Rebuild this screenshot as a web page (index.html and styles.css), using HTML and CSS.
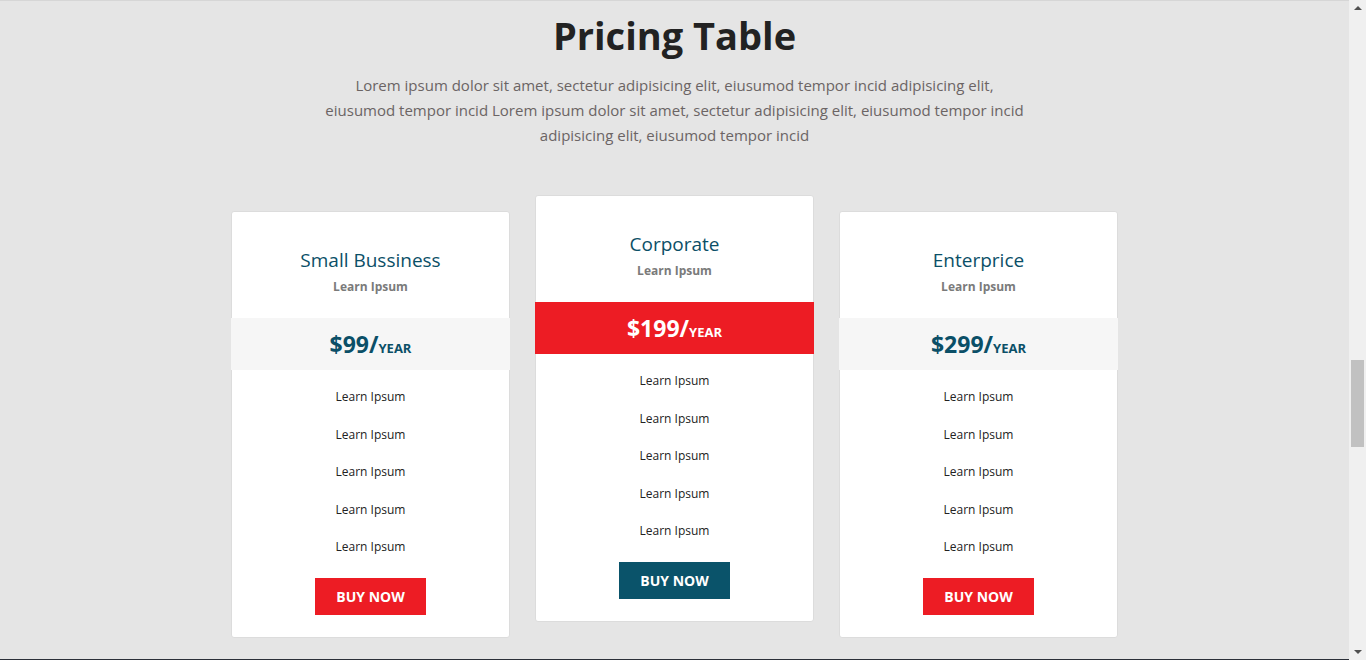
FILE: index.html
```html
<!DOCTYPE html>
<html lang="en">
<head>
<meta charset="utf-8">
<title>Pricing Table</title>
<link rel="stylesheet" href="styles.css">
</head>
<body>
<div class="window">
  <div class="page">
    <section class="pricing">
      <h1 class="title">Pricing Table</h1>
      <p class="lead">Lorem ipsum dolor sit amet, sectetur adipisicing elit, eiusumod tempor incid adipisicing elit,<br>eiusumod tempor incid Lorem ipsum dolor sit amet, sectetur adipisicing elit, eiusumod tempor incid<br>adipisicing elit, eiusumod tempor incid</p>
      <div class="cards">
        <div class="card">
          <h2 class="card-title">Small Bussiness</h2>
          <div class="card-sub">Learn Ipsum</div>
          <div class="price"><span class="amount">$99/</span><span class="per">YEAR</span></div>
          <ul class="features">
            <li>Learn Ipsum</li>
            <li>Learn Ipsum</li>
            <li>Learn Ipsum</li>
            <li>Learn Ipsum</li>
            <li>Learn Ipsum</li>
          </ul>
          <a class="btn btn-red" href="#">BUY NOW</a>
        </div>
        <div class="card card-featured">
          <h2 class="card-title">Corporate</h2>
          <div class="card-sub">Learn Ipsum</div>
          <div class="price price-featured"><span class="amount">$199/</span><span class="per">YEAR</span></div>
          <ul class="features">
            <li>Learn Ipsum</li>
            <li>Learn Ipsum</li>
            <li>Learn Ipsum</li>
            <li>Learn Ipsum</li>
            <li>Learn Ipsum</li>
          </ul>
          <a class="btn btn-teal" href="#">BUY NOW</a>
        </div>
        <div class="card">
          <h2 class="card-title">Enterprice</h2>
          <div class="card-sub">Learn Ipsum</div>
          <div class="price"><span class="amount">$299/</span><span class="per">YEAR</span></div>
          <ul class="features">
            <li>Learn Ipsum</li>
            <li>Learn Ipsum</li>
            <li>Learn Ipsum</li>
            <li>Learn Ipsum</li>
            <li>Learn Ipsum</li>
          </ul>
          <a class="btn btn-red" href="#">BUY NOW</a>
        </div>
      </div>
    </section>
    <div class="next-section"></div>
  </div>
  <div class="scrollbar">
    <div class="arrow arrow-up"></div>
    <div class="track"><div class="thumb"></div></div>
    <div class="arrow arrow-down"></div>
  </div>
</div>
</body>
</html>
```

FILE: styles.css
```css
* { box-sizing: border-box; }
html, body { margin: 0; padding: 0; height: 660px; overflow: hidden; }
body {
  font-family: "Open Sans", "Noto Sans", sans-serif;
  background: #e5e5e5;
}
.window {
  display: flex;
  height: 660px;
}
.page {
  flex: 1;
  display: flex;
  flex-direction: column;
  border-top: 1px solid #d6d6d6;
}
.pricing {
  padding: 12px 0 21px;
  text-align: center;
}
.title {
  margin: 0;
  font-size: 38px;
  line-height: 44px;
  font-weight: 700;
  color: #222222;
}
.lead {
  margin: 16px auto 0;
  max-width: 760px;
  font-size: 15px;
  line-height: 25px;
  color: #6b6464;
}
.cards {
  display: flex;
  justify-content: center;
  align-items: flex-start;
  gap: 25px;
  margin-top: 47px;
}
.card {
  width: 279px;
  margin-top: 16px;
  background: #ffffff;
  border: 1px solid #dcdcdc;
  border-radius: 3px;
  padding: 35px 0 22px;
}
.card-featured { margin-top: 0; }
.card-title {
  margin: 0;
  font-size: 19px;
  line-height: 26px;
  font-weight: 500;
  color: #0b4f67;
}
.card-sub {
  margin-top: 5px;
  font-size: 12px;
  line-height: 18px;
  font-weight: 700;
  color: #7a7a7a;
}
.price {
  margin: 22px -1px 0;
  height: 52px;
  display: flex;
  align-items: center;
  justify-content: center;
  background: #f6f6f6;
  color: #0b4f67;
  font-weight: 700;
}
.price-featured {
  background: #ed1c24;
  color: #ffffff;
}
.amount { font-size: 23px; }
.per { font-size: 13px; margin-top: 7px; }
.features {
  list-style: none;
  margin: 0;
  padding: 8px 0 0;
}
.features li {
  height: 37.5px;
  line-height: 37.5px;
  font-size: 12px;
  color: #222222;
}
.btn {
  display: inline-block;
  margin-top: 12px;
  width: 111px;
  height: 37px;
  line-height: 37px;
  font-size: 14px;
  font-weight: 700;
  color: #ffffff;
  text-decoration: none;
}
.btn-red { background: #ed1c24; }
.btn-teal { background: #0a536a; }
.next-section {
  flex: 1;
  background: #2b2f38;
}
.scrollbar {
  width: 17px;
  background: #f0f0f0;
  display: flex;
  flex-direction: column;
  align-items: center;
}
.arrow {
  width: 0;
  height: 0;
  border-left: 4px solid transparent;
  border-right: 4px solid transparent;
  margin: 6px 0;
}
.arrow-up { border-bottom: 4px solid #505050; }
.arrow-down { border-top: 4px solid #505050; }
.track {
  flex: 1;
  width: 100%;
  padding-top: 344px;
  display: flex;
  justify-content: center;
}
.thumb {
  width: 13px;
  height: 87px;
  background: #c1c1c1;
}
```
